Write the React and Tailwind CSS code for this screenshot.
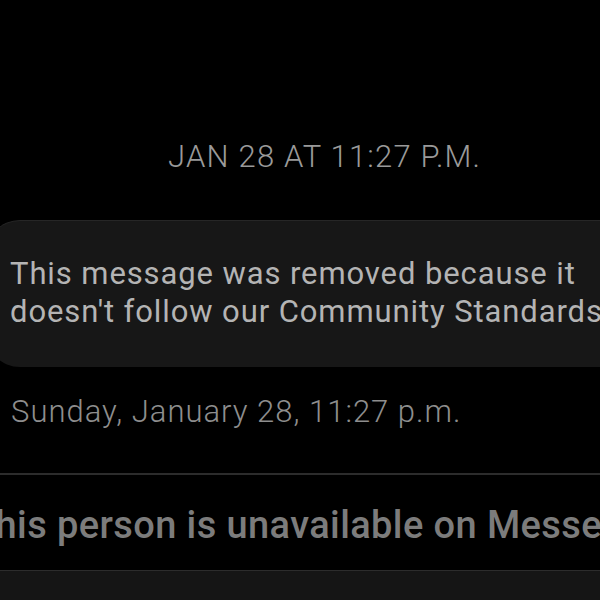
export default function App() {
  return (
    <div
      className="h-[600px] w-[600px] overflow-hidden bg-black flex flex-col"
      style={{ fontFamily: "Roboto, 'Noto Sans', sans-serif" }}
    >
      {/* date separator */}
      <div className="pt-[139px] pl-[168px] text-[31px] font-light leading-[36px] tracking-[1.2px] text-[#9a9a9a] whitespace-nowrap">
        JAN 28 AT 11:27 P.M.
      </div>

      {/* removed message bubble */}
      <div className="mt-[45px] -ml-[14px] w-[680px] h-[147px] rounded-l-[34px] bg-[#171717] border-t border-[#262626] pt-[34px] pl-[24px] text-[31px] leading-[38px] tracking-[0.9px] text-[#b4b4b4] whitespace-nowrap">
        <p>This message was removed because it</p>
        <p>doesn't follow our Community Standards</p>
      </div>

      <div className="mt-[27px] pl-[11px] text-[31px] font-light leading-[36px] tracking-[1px] text-[#8e8e8e] whitespace-nowrap">
        Sunday, January 28, 11:27 p.m.
      </div>

      {/* unavailable notice */}
      <div className="mt-[43px] border-t-2 border-[#2c2c2c] h-[97px] flex items-center -ml-[28px] pt-[4px] whitespace-nowrap">
        <span className="text-[38px] font-medium tracking-[0.4px] text-[#7c7c7c] leading-none">
          This person is unavailable on Messenger
        </span>
      </div>

      <div className="flex-1 bg-[#151515] border-t border-[#2c2c2c]" />
    </div>
  );
}
